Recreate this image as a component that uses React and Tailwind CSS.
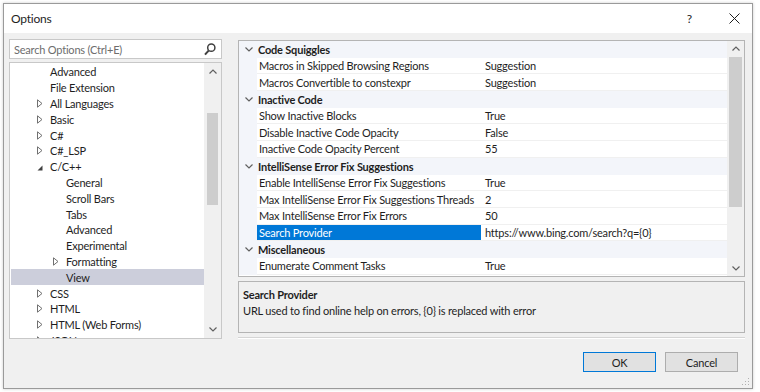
import React from "react";

const font = { fontFamily: 'Lato, "Noto Sans", sans-serif' };

const tree = [
  { t: "Advanced", l: 1 },
  { t: "File Extension", l: 1 },
  { t: "All Languages", l: 1, e: "c" },
  { t: "Basic", l: 1, e: "c" },
  { t: "C#", l: 1, e: "c" },
  { t: "C#_LSP", l: 1, e: "c" },
  { t: "C/C++", l: 1, e: "o" },
  { t: "General", l: 2 },
  { t: "Scroll Bars", l: 2 },
  { t: "Tabs", l: 2 },
  { t: "Advanced", l: 2 },
  { t: "Experimental", l: 2 },
  { t: "Formatting", l: 2, e: "c" },
  { t: "View", l: 2, s: true },
  { t: "CSS", l: 1, e: "c" },
  { t: "HTML", l: 1, e: "c" },
  { t: "HTML (Web Forms)", l: 1, e: "c" },
  { t: "JSON", l: 1, e: "c" },
];

const grid = [
  { c: "Code Squiggles" },
  { n: "Macros in Skipped Browsing Regions", v: "Suggestion" },
  { n: "Macros Convertible to constexpr", v: "Suggestion" },
  { c: "Inactive Code" },
  { n: "Show Inactive Blocks", v: "True" },
  { n: "Disable Inactive Code Opacity", v: "False" },
  { n: "Inactive Code Opacity Percent", v: "55" },
  { c: "IntelliSense Error Fix Suggestions" },
  { n: "Enable IntelliSense Error Fix Suggestions", v: "True" },
  { n: "Max IntelliSense Error Fix Suggestions Threads", v: "2" },
  { n: "Max IntelliSense Error Fix Errors", v: "50" },
  { n: "Search Provider", v: "https://www.bing.com/search?q={0}", s: true },
  { c: "Miscellaneous" },
  { n: "Enumerate Comment Tasks", v: "True" },
];

function Chevron({ up, className = "" }) {
  return (
    <svg width="8" height="5" viewBox="0 0 8 5" className={className}>
      <path
        d={up ? "M0.5 4.5 L4 1 L7.5 4.5" : "M0.5 0.5 L4 4 L7.5 0.5"}
        fill="none"
        stroke="#606060"
        strokeWidth="1.2"
      />
    </svg>
  );
}

function Arrow({ e }) {
  if (e === "c")
    return (
      <svg width="6" height="9" viewBox="0 0 6 9" className="ml-[3px]">
        <path d="M0.5 0.8 L5 4.5 L0.5 8.2 Z" fill="none" stroke="#707070" strokeWidth="1" />
      </svg>
    );
  if (e === "o")
    return (
      <svg width="6" height="6" viewBox="0 0 6 6" className="ml-[3px] mt-[2px]">
        <path d="M5.5 0.5 L5.5 5.5 L0.5 5.5 Z" fill="#404040" />
      </svg>
    );
  return null;
}

export default function App() {
  return (
    <div
      className="w-[760px] h-[392px] bg-white text-[#1e1e1e] text-[11px] tracking-[-0.2px] leading-none"
      style={font}
    >
      <div className="absolute left-[3px] top-[3px] w-[750px] h-[386px] border border-[#9a9a9a] shadow-[0_0_3px_rgba(0,0,0,0.2)] flex flex-col bg-[#f0f0f0]">
        {/* title bar */}
        <div className="h-[29px] bg-white flex items-center shrink-0">
          <span className="ml-[7px] text-[12px]">Options</span>
          <div className="flex-1" />
          <span className="text-[12px] mr-[37px]">?</span>
          <svg width="11" height="11" viewBox="0 0 11 11" className="mr-[12px]">
            <path d="M0.5 0.5 L10.5 10.5 M10.5 0.5 L0.5 10.5" stroke="#1e1e1e" strokeWidth="1" />
          </svg>
        </div>

        {/* body */}
        <div className="flex pl-[5px] pt-[6px]">
          {/* left */}
          <div className="w-[213px] flex flex-col">
            <div className="h-[20px] bg-white border border-[#c8c8c8] flex items-center pl-[4px] pr-[5px]">
              <span className="text-[#6d6d6d] flex-1">Search Options (Ctrl+E)</span>
              <svg width="12" height="13" viewBox="0 0 12 13">
                <circle cx="7.3" cy="4.7" r="3.6" fill="none" stroke="#404040" strokeWidth="1.5" />
                <path d="M4.6 7.6 L1 11.6" stroke="#404040" strokeWidth="2" />
              </svg>
            </div>
            <div className="mt-[3px] h-[277px] bg-white border border-[#c8c8c8] flex overflow-hidden">
              <div className="flex-1 pt-[1px] overflow-hidden">
                {tree.map((it, i) => (
                  <div
                    key={i}
                    className={`h-[15.8px] flex items-center ${it.s ? "bg-[#cccedb] ml-[1px]" : ""}`}
                  >
                    <div
                      className={`flex items-center w-[16px] shrink-0 ${
                        it.l === 1 ? (it.s ? "ml-[23px]" : "ml-[24px]") : it.s ? "ml-[39px]" : "ml-[40px]"
                      }`}
                    >
                      <Arrow e={it.e} />
                    </div>
                    <span className="whitespace-nowrap">{it.t}</span>
                  </div>
                ))}
              </div>
              <div className="w-[17px] bg-[#f0f0f0] flex flex-col items-center shrink-0">
                <div className="h-[17px] flex items-center justify-center">
                  <Chevron up />
                </div>
                <div className="mt-[33px] w-[11px] h-[92px] bg-[#cdcdcd]" />
                <div className="flex-1" />
                <div className="h-[17px] flex items-center justify-center">
                  <Chevron />
                </div>
              </div>
            </div>
          </div>

          {/* right */}
          <div className="ml-[16px] w-[507px] flex flex-col pt-[1px]">
            <div className="h-[237px] bg-white border border-[#b4b4b4] flex overflow-hidden">
              <div className="flex-1">
                {grid.map((r, i) =>
                  r.c ? (
                    <div key={i} className="h-[16.7px] flex items-center bg-[#f3f5fa]">
                      <div className="w-[19px] flex justify-center pl-[1px]">
                        <Chevron />
                      </div>
                      <span className="font-bold">{r.c}</span>
                    </div>
                  ) : (
                    <div key={i} className="h-[16.7px] flex">
                      <div className="w-[18px] bg-[#f3f5fa] shrink-0" />
                      <div
                        className={`w-[224px] shrink-0 flex items-center pl-[2px] border-b border-[#f0f0f0] whitespace-nowrap ${
                          r.s ? "bg-[#0078d7] text-white" : ""
                        }`}
                      >
                        {r.n}
                      </div>
                      <div className="flex-1 flex items-center pl-[4px] border-b border-[#f0f0f0] whitespace-nowrap">
                        {r.v}
                      </div>
                    </div>
                  )
                )}
              </div>
              <div className="w-[17px] bg-[#f0f0f0] flex flex-col items-center shrink-0">
                <div className="h-[14px] flex items-center justify-center">
                  <Chevron up />
                </div>
                <div className="mt-[2px] w-[13px] h-[150px] bg-[#cdcdcd]" />
                <div className="flex-1" />
                <div className="h-[16px] flex items-center justify-center">
                  <Chevron />
                </div>
              </div>
            </div>
            <div className="mt-[4px] h-[52px] border border-[#b4b4b4] bg-[#f0f0f0] pl-[4px] pt-[4px]">
              <div className="font-bold h-[16px] flex items-center">Search Provider</div>
              <div className="h-[16px] flex items-center">URL used to find online help on errors, {"{0}"} is replaced with error</div>
            </div>
            <div className="mt-[4px] h-[1px] bg-[#d5d5d5] border-b border-white box-content" />
          </div>
        </div>

        {/* buttons */}
        <div className="flex justify-end pr-[14px] mt-[13px] gap-[9px]">
          <div className="w-[73px] h-[20px] bg-[#e1e1e1] border border-[#0078d7] flex items-center justify-center">
            OK
          </div>
          <div className="w-[73px] h-[20px] bg-[#e1e1e1] border border-[#adadad] flex items-center justify-center">
            Cancel
          </div>
        </div>
        <div className="flex-1" />
        <div className="flex justify-end pr-[2px] pb-[2px]">
          <svg width="8" height="8" viewBox="0 0 8 8">
            <rect x="6" y="6" width="1" height="1" fill="#b0b0b0" />
            <rect x="3" y="6" width="1" height="1" fill="#b0b0b0" />
            <rect x="6" y="3" width="1" height="1" fill="#b0b0b0" />
            <rect x="0" y="6" width="1" height="1" fill="#b0b0b0" />
            <rect x="3" y="3" width="1" height="1" fill="#b0b0b0" />
            <rect x="6" y="0" width="1" height="1" fill="#b0b0b0" />
          </svg>
        </div>
      </div>
    </div>
  );
}
